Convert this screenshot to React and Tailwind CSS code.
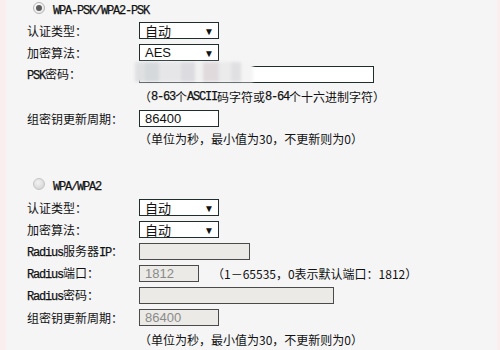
const cjk = "font-['Noto_Sans_CJK_SC','Noto_Sans',sans-serif]";

// ASCII bits in the old router pages are narrow bitmap serif glyphs
function M({ children }) {
  return (
    <span className="font-['Liberation_Mono',monospace] text-[12px] tracking-[-1.2px] [-webkit-text-stroke:0.25px_#111]">
      {children}
    </span>
  );
}

function Radio({ checked, label }) {
  return (
    <div className="flex items-center h-[15px] pl-[6px]">
      <span
        className={`w-[12px] h-[12px] rounded-full border flex items-center justify-center ${
          checked
            ? "border-[#b4b4b4] bg-[radial-gradient(circle_at_40%_35%,#ffffff,#e2e2e2)]"
            : "border-[#c4c4c4] bg-[radial-gradient(circle_at_40%_35%,#f2f2f2,#cfcfcf)]"
        }`}
      >
        {checked && <span className="w-[6px] h-[6px] rounded-full bg-[#5c5c5c]" />}
      </span>
      <span className="ml-[8px] text-[#111]">
        <M>{label}</M>
      </span>
    </div>
  );
}

function Row({ label, children }) {
  return (
    <div className="flex items-center h-[17px] mb-[5px]">
      <div className={`w-[112px] text-[12px] text-[#111] ${cjk} leading-none`}>{label}</div>
      {children}
    </div>
  );
}

function Select({ value, latin }) {
  return (
    <div className="w-[80px] h-[17px] border border-[#1f2d2d] bg-white flex items-center justify-between pl-[5px] pr-[4px]">
      <span
        className={
          latin
            ? "font-['Liberation_Sans',sans-serif] text-[13px] leading-none text-[#111]"
            : `${cjk} text-[13px] leading-none text-[#111]`
        }
      >
        {value}
      </span>
      <span className="text-[10px] leading-none text-[#111]">▼</span>
    </div>
  );
}

function Input({ w, value, disabled }) {
  return (
    <div
      className={`${w} h-[17px] border flex items-center pl-[5px] font-['Liberation_Sans',sans-serif] text-[13px] leading-none ${
        disabled ? "bg-[#ebeae6] border-[#4a4a4a] text-[#8a8a8a]" : "bg-white border-[#1f2d2d] text-[#111]"
      }`}
    >
      {value}
    </div>
  );
}

function Hint({ children, className = "" }) {
  return (
    <div className={`flex items-center h-[17px] pl-[112px] text-[12px] text-[#111] ${cjk} leading-none ${className}`}>
      {children}
    </div>
  );
}

export default function App() {
  return (
    <div className="w-[500px] h-[350px] flex overflow-hidden bg-[#f5f5f6]">
      <div className="w-[6px] bg-[#fbeeee]" />
      <div className="flex-1 pl-[21px] flex flex-col">
        {/* WPA-PSK/WPA2-PSK */}
        <div className="mb-[7px]">
          <Radio checked label="WPA-PSK/WPA2-PSK" />
        </div>
        <Row label="认证类型：">
          <Select value="自动" />
        </Row>
        <Row label="加密算法：">
          <Select value="AES" latin />
        </Row>
        <Row label={<><M>PSK</M>密码：</>}>
          <div className="relative">
            <Input w="w-[235px]" value="" />
            {/* blurred password */}
            <div className="absolute left-[-4px] top-[-4px] w-[118px] h-[20px] flex blur-[1.5px]">
              <div className="w-[10px] bg-[#dfe0e1]" />
              <div className="w-[14px] bg-[#d6d9db]" />
              <div className="w-[22px] bg-[#e6e6e8]" />
              <div className="w-[14px] bg-[#dcdbe0]" />
              <div className="w-[8px] bg-[#f1f1f1]" />
              <div className="w-[16px] bg-[#e0dadd]" />
              <div className="w-[12px] bg-[#ebebec]" />
              <div className="w-[10px] bg-[#e0e0e2]" />
              <div className="w-[12px] bg-[#f4f4f4]" />
            </div>
          </div>
        </Row>
        <Hint className="mb-[5px]">
          （<M>8-63</M>个<M>ASCII</M>码字符或<M>8-64</M>个十六进制字符）
        </Hint>
        <Row label="组密钥更新周期：">
          <Input w="w-[80px]" value="86400" />
        </Row>
        <Hint className="-mt-[2px]">（单位为秒，最小值为30，不更新则为0）</Hint>

        {/* WPA/WPA2 */}
        <div className="mt-[29px] mb-[8px]">
          <Radio label="WPA/WPA2" />
        </div>
        <Row label="认证类型：">
          <Select value="自动" />
        </Row>
        <Row label="加密算法：">
          <Select value="自动" />
        </Row>
        <Row label={<><M>Radius</M>服务器<M>IP</M>：</>}>
          <Input w="w-[111px]" value="" disabled />
        </Row>
        <Row label={<><M>Radius</M>端口：</>}>
          <Input w="w-[60px]" value="1812" disabled />
          <span className={`ml-[13px] text-[12px] text-[#111] ${cjk} leading-none`}>
            （1－65535，0表示默认端口：1812）
          </span>
        </Row>
        <Row label={<><M>Radius</M>密码：</>}>
          <Input w="w-[195px]" value="" disabled />
        </Row>
        <Row label="组密钥更新周期：">
          <Input w="w-[80px]" value="86400" disabled />
        </Row>
        <Hint>（单位为秒，最小值为30，不更新则为0）</Hint>
      </div>
      <div className="w-[3px] bg-[#fbeeee]" />
    </div>
  );
}
